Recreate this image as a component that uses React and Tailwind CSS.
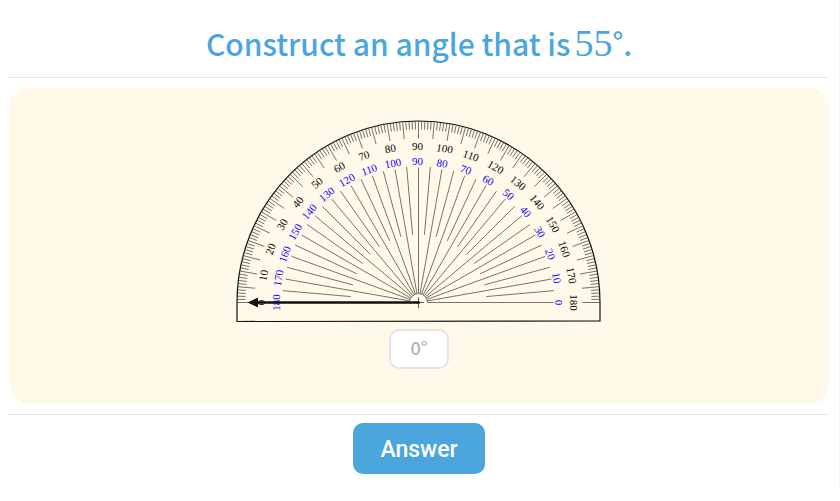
import React, { useState } from 'react';

const CX = 182.5;
const CY = 182.5;
const OUTER = 181;

const degrees = Array.from({ length: 181 }, (_, i) => i);
const tens = degrees.filter((d) => d % 10 === 0);
const fives = degrees.filter((d) => d % 5 === 0);

// 0 degrees points left, angles grow clockwise
const point = (deg, r) => {
  const rad = (deg * Math.PI) / 180;
  return { x: CX - r * Math.cos(rad), y: CY - r * Math.sin(rad) };
};

const Ray = ({ deg, from, to }) => {
  const a = point(deg, from);
  const b = point(deg, to);
  return <line x1={a.x} y1={a.y} x2={b.x} y2={b.y} />;
};

const ScaleLabel = ({ deg, r, children }) => {
  const p = point(deg, r);
  return (
    <text textAnchor="middle" transform={`translate(${p.x - 1} ${p.y}) rotate(${deg - 90})`} y="3">
      {children}
    </text>
  );
};

const Protractor = ({ angle }) => (
  <svg
    viewBox="0 0 366 204"
    className="block h-[204px] w-[366px] max-w-full font-['Liberation_Serif',serif] text-[11px]"
    role="img"
    aria-label="Protractor"
  >
    <g stroke="#77736a" strokeWidth="1">
      {degrees.map((d) => (
        <Ray key={d} deg={d} from={d % 5 === 0 ? 164 : 173} to={OUTER} />
      ))}
      {fives.map((d) => (
        <Ray key={d} deg={d} from={d % 10 === 0 ? 9 : 68} to={d % 10 === 0 ? 135 : 136} />
      ))}
      <path d={`M${CX - 9} ${CY}a9 9 0 0 1 18 0`} fill="none" />
    </g>

    <path
      d={`M${CX - OUTER - 0.5} ${CY + 19}V${CY}a181.5 181.5 0 0 1 363 0v18.5z`}
      fill="none"
      stroke="#111"
      strokeWidth="1.2"
    />

    <g fill="#000">
      {tens.map((d) => (
        <ScaleLabel key={d} deg={d} r={155.5}>
          {d}
        </ScaleLabel>
      ))}
    </g>
    <g fill="#1000ff">
      {tens.map((d) => (
        <ScaleLabel key={d} deg={d} r={140.5}>
          {180 - d}
        </ScaleLabel>
      ))}
    </g>

    <path d={`M${CX - 5} ${CY}h10.5M${CX} ${CY - 5}v10.5`} stroke="#444" strokeWidth="0.9" />
    <g transform={`rotate(${angle} ${CX} ${CY})`} fill="#111">
      <path d={`M${CX} ${CY}H21`} stroke="#111" strokeWidth="2.4" />
      <path d={`M11.5 ${CY}l10.5 -5v10z`} />
      <circle cx={CX} cy={CY} r="1.5" />
    </g>
  </svg>
);

export default function App() {
  const [value, setValue] = useState('');

  return (
    <main className="border-r border-neutral-100 bg-white pr-[10px] pb-[14px] pl-[9px]">
      <h1 className="flex h-[77px] items-baseline justify-center gap-1 pt-[19px] font-['Noto_Sans_CJK_SC',sans-serif] text-[30px] leading-[48px] font-medium text-[#4aa6dd]">
        <span>Construct an angle that is</span>
        <span className="flex items-baseline">
          <span className="font-['Liberation_Serif',serif] text-[38px] font-normal">55</span>
          <span className="self-start text-[28px] leading-[44px]">°</span>
          <span>.</span>
        </span>
      </h1>
      <hr className="border-neutral-200" />

      <section className="mt-[10px] flex flex-col items-center rounded-[20px] bg-[#fff9e9] pt-8 pb-[35px]">
        <Protractor angle={parseInt(value, 10) || 0} />
        <input
          aria-label="Angle in degrees"
          value={value}
          onChange={(e) => setValue(e.target.value)}
          placeholder="0°"
          className="mt-[5px] h-10 w-[60px] rounded-[10px] border-2 border-[#e4e4e8] bg-white pb-1 text-center font-['Noto_Sans_CJK_SC',sans-serif] text-lg font-medium text-[#b8b3a8] outline-none placeholder:text-[#b8b3a8]"
        />
      </section>

      <hr className="mt-[10px] border-neutral-200" />
      <div className="flex justify-center pt-2">
        <button
          type="button"
          className="h-[51px] w-[132px] rounded-[10px] bg-[#4aa6dd] pt-1 font-[Roboto,sans-serif] text-[23px] font-medium text-white"
        >
          Answer
        </button>
      </div>
    </main>
  );
}
